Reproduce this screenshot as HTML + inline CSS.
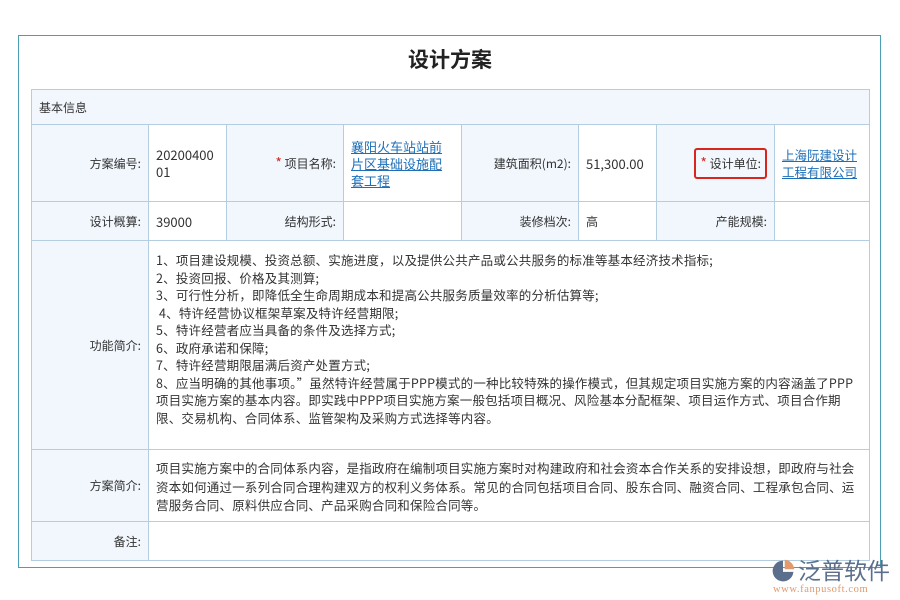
<!DOCTYPE html><html><head><meta charset="utf-8"><style>
body{margin:0;width:900px;height:600px;background:#fff;font-family:"Liberation Sans","Noto Sans CJK SC",sans-serif;color:#333;position:relative;overflow:hidden}
.outer{position:absolute;left:18px;top:35px;width:863px;height:533px;border:1px solid #4a9fb5;box-sizing:border-box}
h1{position:absolute;left:0;width:900px;top:44px;margin:0;text-align:center;font-size:21px;font-weight:bold;color:#222;font-family:"Noto Sans CJK SC",sans-serif}
table{position:absolute;left:31px;top:89px;width:838px;border-collapse:collapse;font-size:12px;font-family:"Noto Sans CJK SC",sans-serif;table-layout:fixed}
td{border:1.5px solid #b4cde0;padding:0 7px;vertical-align:middle;word-break:break-all;overflow:hidden}
td.l{background:#f1f7fd;text-align:right}
td.v{background:#fff}
td.long{font-size:12.5px;letter-spacing:0.2px;padding-right:4px}
a{color:#1e6fb8;text-decoration:underline}
.s{color:#d9261c;font-size:14px}
.red{border:2px solid #d9261c;border-radius:3px;padding:5px 4px}
.logo{position:absolute;left:770px;top:556px}
</style></head><body>
<div class="outer"></div>
<h1>设计方案</h1>
<table>
<colgroup><col style="width:117px"><col style="width:78px"><col style="width:117px"><col style="width:118px"><col style="width:117px"><col style="width:78px"><col style="width:118px"><col style="width:95px"></colgroup>
<tr style="height:35px"><td colspan="8" class="l" style="text-align:left">基本信息</td></tr>
<tr style="height:77px"><td class="l">方案编号:</td><td class="v" style="font-size:13px;line-height:17px">2020040001</td><td class="l"><span class="s">*</span> 项目名称:</td><td class="v" style="line-height:17px;font-size:13px;padding-right:4px"><a>襄阳火车站站前<br>片区基础设施配<br>套工程</a></td><td class="l">建筑面积(m2):</td><td class="v" style="font-size:13px">51,300.00</td><td class="l"><span class="red"><span class="s">*</span> 设计单位:</span></td><td class="v" style="line-height:17px;font-size:12.5px"><a>上海阮建设计<br>工程有限公司</a></td></tr>
<tr style="height:39px"><td class="l">设计概算:</td><td class="v" style="font-size:13px">39000</td><td class="l">结构形式:</td><td class="v"></td><td class="l">装修档次:</td><td class="v">高</td><td class="l">产能规模:</td><td class="v"></td></tr>
<tr style="height:209px"><td class="l">功能简介:</td><td colspan="7" class="v long" style="line-height:17.5px;vertical-align:top;padding-top:10px">1、项目建设规模、投资总额、实施进度，以及提供公共产品或公共服务的标准等基本经济技术指标;<br>2、投资回报、价格及其测算;<br>3、可行性分析，即降低全生命周期成本和提高公共服务质量效率的分析估算等;<br>&nbsp;4、特许经营协议框架草案及特许经营期限;<br>5、特许经营者应当具备的条件及选择方式;<br>6、政府承诺和保障;<br>7、特许经营期限届满后资产处置方式;<br>8、应当明确的其他事项。”虽然特许经营属于PPP模式的一种比较特殊的操作模式，但其规定项目实施方案的内容涵盖了PPP<br>项目实施方案的基本内容。即实践中PPP项目实施方案一般包括项目概况、风险基本分配框架、项目运作方式、项目合作期<br>限、交易机构、合同体系、监管架构及采购方式选择等内容。</td></tr>
<tr style="height:72px"><td class="l">方案简介:</td><td colspan="7" class="v long" style="line-height:18.5px;vertical-align:top;padding-top:9px">项目实施方案中的合同体系内容，是指政府在编制项目实施方案时对构建政府和社会资本合作关系的安排设想，即政府与社会<br>资本如何通过一系列合同合理构建双方的权利义务体系。常见的合同包括项目合同、股东合同、融资合同、工程承包合同、运<br>营服务合同、原料供应合同、产品采购合同和保险合同等。</td></tr>
<tr style="height:39px"><td class="l">备注:</td><td colspan="7" class="v"></td></tr>
</table>
<div class="logo">
<svg width="26" height="26" viewBox="0 0 30 30" style="position:absolute;left:0;top:2px"><path d="M15 3 A12 12 0 1 0 27 16 L15 16 Z" fill="#5b6f8c"/><path d="M17 2 A12 12 0 0 1 28 13 L17 13Z" fill="#e09a6e"/></svg>
<div style="position:absolute;left:28px;top:-2px;font-size:23px;line-height:30px;color:#5b6f8c;font-family:'Noto Sans CJK SC',sans-serif;white-space:nowrap">泛普软件</div>
<div style="position:absolute;left:3px;top:28px;font-size:10.5px;color:#e09a6e;font-family:'Liberation Serif',serif;white-space:nowrap;letter-spacing:0.6px">www.fanpusoft.com</div>
</div>
</body></html>
